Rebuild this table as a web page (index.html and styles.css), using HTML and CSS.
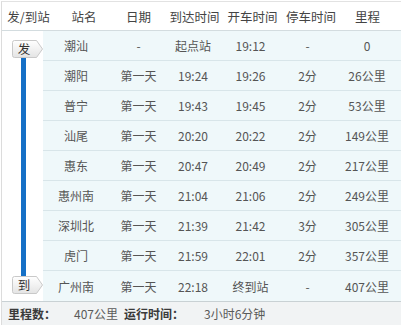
FILE: index.html
```html
<!DOCTYPE html>
<html lang="zh-CN">
<head>
<meta charset="utf-8">
<title>时刻表</title>
<link rel="stylesheet" href="styles.css">
</head>
<body>
<div class="table">
  <div class="head">
    <div class="h">发/到站</div>
    <div class="h">站名</div>
    <div class="h">日期</div>
    <div class="h">到达时间</div>
    <div class="h">开车时间</div>
    <div class="h">停车时间</div>
    <div class="h">里程</div>
  </div>
  <div class="body">
    <div class="rail">
      <div class="badge badge-start">
        <svg class="badge-shape" width="31" height="18" viewBox="0 0 31 18"><defs><linearGradient id="g1" x1="0" y1="0" x2="0" y2="1"><stop offset="0" stop-color="#ffffff"/><stop offset="1" stop-color="#e4e4e4"/></linearGradient></defs><path d="M2.5 0.5 H24.5 L30.5 9 L24.5 17.5 H2.5 Q0.5 17.5 0.5 15.5 V2.5 Q0.5 0.5 2.5 0.5 Z" fill="url(#g1)" stroke="#c9c9c9"/></svg>
        <span class="badge-text">发</span>
      </div>
      <div class="bar"></div>
      <div class="badge badge-end">
        <svg class="badge-shape" width="31" height="18" viewBox="0 0 31 18"><defs><linearGradient id="g2" x1="0" y1="0" x2="0" y2="1"><stop offset="0" stop-color="#ffffff"/><stop offset="1" stop-color="#e4e4e4"/></linearGradient></defs><path d="M2.5 0.5 H24.5 L30.5 9 L24.5 17.5 H2.5 Q0.5 17.5 0.5 15.5 V2.5 Q0.5 0.5 2.5 0.5 Z" fill="url(#g2)" stroke="#c9c9c9"/></svg>
        <span class="badge-text">到</span>
      </div>
    </div>
    <div class="rows">
      <div class="row"><span>潮汕</span><span>-</span><span>起点站</span><span>19:12</span><span>-</span><span>0</span></div>
      <div class="row"><span>潮阳</span><span>第一天</span><span>19:24</span><span>19:26</span><span>2分</span><span>26公里</span></div>
      <div class="row"><span>普宁</span><span>第一天</span><span>19:43</span><span>19:45</span><span>2分</span><span>53公里</span></div>
      <div class="row"><span>汕尾</span><span>第一天</span><span>20:20</span><span>20:22</span><span>2分</span><span>149公里</span></div>
      <div class="row"><span>惠东</span><span>第一天</span><span>20:47</span><span>20:49</span><span>2分</span><span>217公里</span></div>
      <div class="row"><span>惠州南</span><span>第一天</span><span>21:04</span><span>21:06</span><span>2分</span><span>249公里</span></div>
      <div class="row"><span>深圳北</span><span>第一天</span><span>21:39</span><span>21:42</span><span>3分</span><span>305公里</span></div>
      <div class="row"><span>虎门</span><span>第一天</span><span>21:59</span><span>22:01</span><span>2分</span><span>357公里</span></div>
      <div class="row last"><span>广州南</span><span>第一天</span><span>22:18</span><span>终到站</span><span>-</span><span>407公里</span></div>
    </div>
  </div>
  <div class="foot">
    <span class="lbl l1">里程数：</span><span class="val v1">407公里</span><span class="lbl l2">运行时间：</span><span class="val">3小时6分钟</span>
  </div>
</div>
</body>
</html>
```

FILE: styles.css
```css
html, body {
  margin: 0;
  padding: 0;
  background: #ffffff;
}

body {
  font-family: "Noto Sans CJK SC", "Noto Sans", sans-serif;
  font-size: 12px;
  color: #505050;
}

.table {
  margin: 1px 0 0 1px;
  border-top: 1px solid #e2e2e2;
  border-left: 1px solid #dcdcdc;
  width: 400px;
  height: 323px;
  display: flex;
  flex-direction: column;
}

.head {
  display: grid;
  grid-template-columns: 53px 58px 51px 61px 55px 62px 51px 1fr;
  height: 28px;
  border-bottom: 1px solid #d3dcdf;
  background: #fff;
  color: #444;
  font-size: 12.5px;
}

.h {
  display: flex;
  align-items: center;
  justify-content: center;
  white-space: nowrap;
}

.body {
  display: flex;
}

.rail {
  width: 41px;
  flex: none;
  display: flex;
  flex-direction: column;
  padding: 9px 0 7px;
  box-sizing: border-box;
  background: #fff;
}

.badge {
  position: relative;
  width: 31px;
  height: 18px;
  margin-left: 10px;
  display: flex;
  align-items: center;
}

.badge-shape {
  position: absolute;
  left: 0;
  top: 0;
}

.badge-text {
  position: relative;
  width: 24px;
  text-align: center;
  color: #333;
  font-size: 12.5px;
  line-height: 18px;
}

.bar {
  flex: 1;
  width: 5px;
  margin-left: 19px;
  background: #1570c6;
}

.rows {
  flex: 1;
  display: flex;
  flex-direction: column;
}

.row {
  display: grid;
  grid-template-columns: 66px 59px 50px 65px 49px 1fr;
  height: 30px;
  box-sizing: border-box;
  border-bottom: 1px solid #d8e5e9;
  background: #eff8fa;
  align-items: center;
  text-align: center;
  white-space: nowrap;
  color: #555;
}

.row.last {
  border-bottom: none;
}

.foot {
  flex: 1;
  border-top: 1px solid #c9d1d4;
  background: #f1f3f4;
  display: flex;
  align-items: center;
  padding-left: 6px;
  white-space: nowrap;
}

.lbl {
  font-weight: bold;
  color: #3a3a3a;
}

.val {
  color: #5a5a5a;
}

.l1 {
  width: 66px;
}

.v1 {
  width: 50px;
}

.l2 {
  width: 80px;
}
```
